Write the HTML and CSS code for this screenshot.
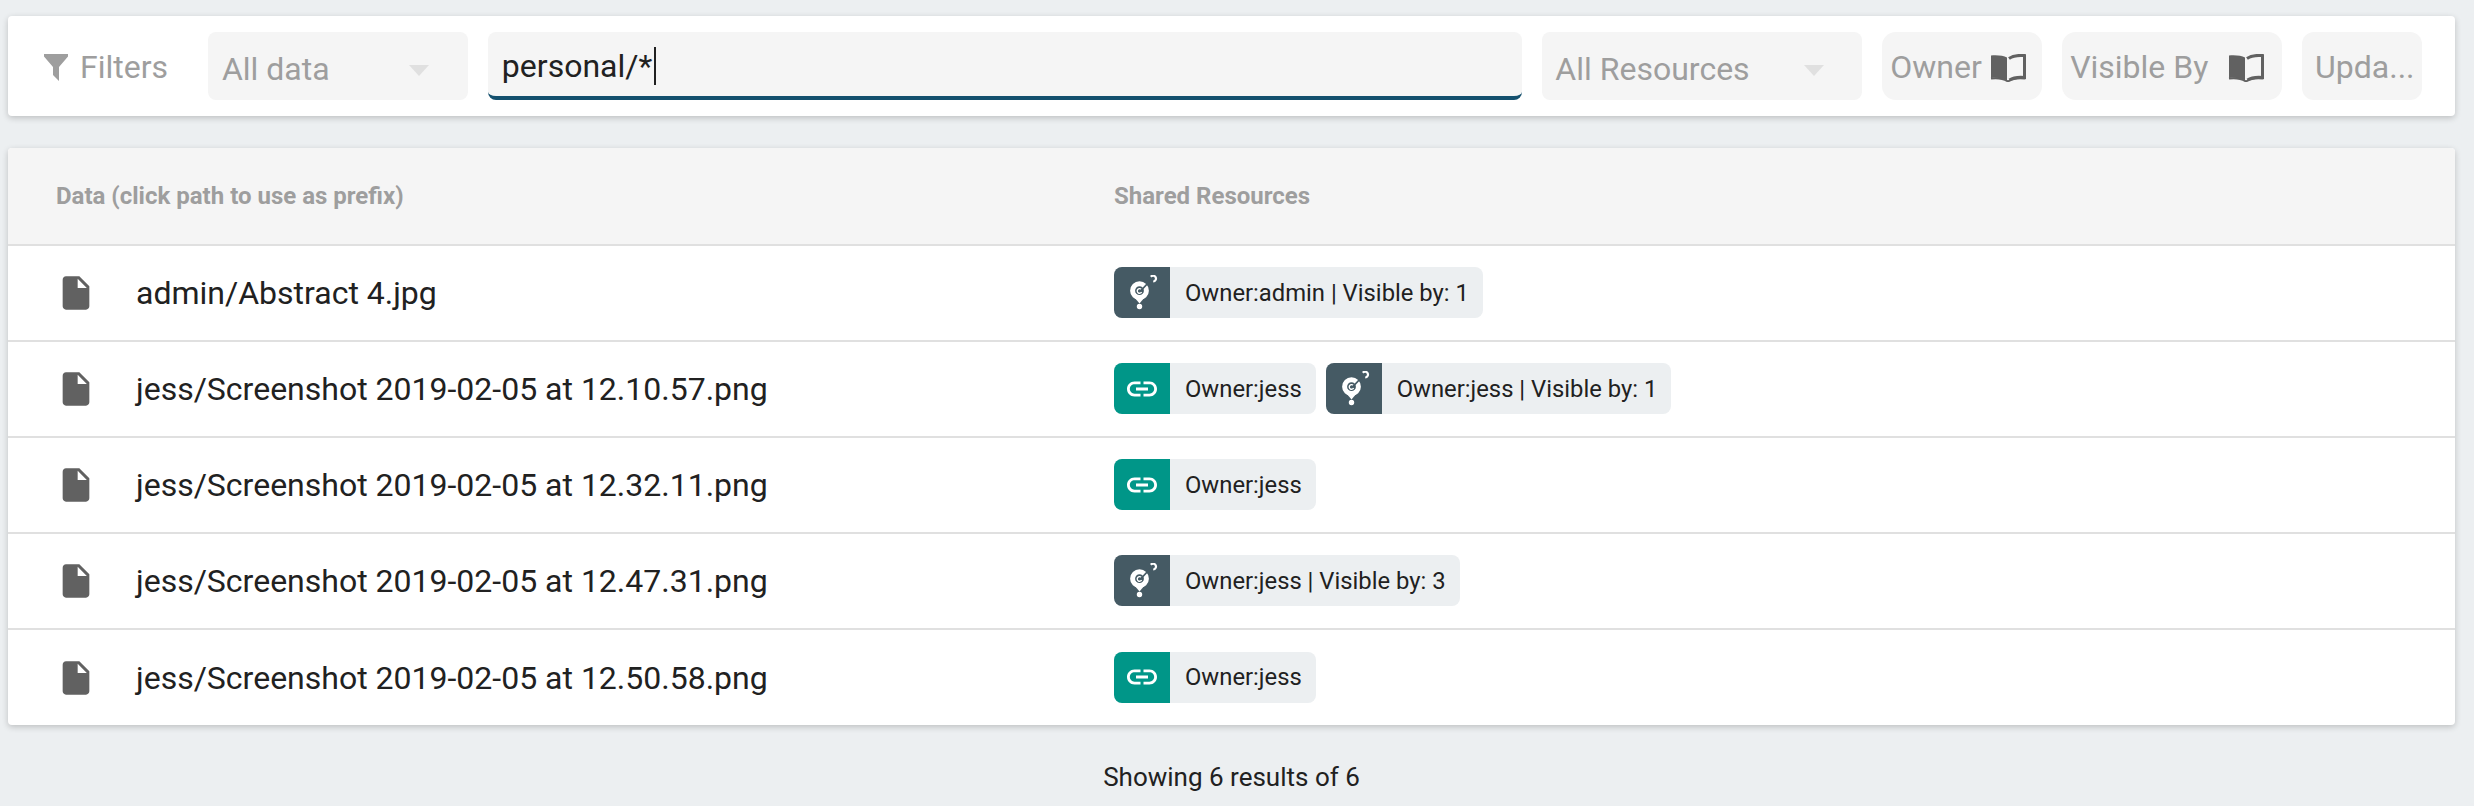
FILE: index.html
```html
<!DOCTYPE html>
<html lang="en">
<head>
<meta charset="utf-8">
<title>Shared data</title>
<link rel="stylesheet" href="styles.css">
</head>
<body>
<svg class="defs" width="0" height="0" aria-hidden="true">
  <defs>
    <symbol id="i-book" viewBox="0 0 36 28">
      <path d="M17 3.500C13.500 1.500 8 1 1 1.400V24c6.500-.6 12 .2 16 2.700z" fill="#616161"/>
      <path d="M19 4.500C22.500 2 28 1 34.500 1.600V23.500c-6-.5-11.500 .2-15 2.600" fill="none" stroke="#616161" stroke-width="3"/>
      <path d="M1 24.500c6.500-.8 12.500 0 17 3 4.500-3 10.500-3.800 17-3" fill="none" stroke="#616161" stroke-width="2"/>
    </symbol>
    <symbol id="i-file" viewBox="0 0 24 24">
      <path d="M6 2c-1.100 0-2 .9-2 2v16c0 1.100.9 2 2 2h12c1.100 0 2-.9 2-2V8l-6-6H6zm7 7V3.500L18.500 9H13z"/>
    </symbol>
    <symbol id="i-link" viewBox="0 0 24 24">
      <path d="M3.900 12c0-1.710 1.390-3.100 3.100-3.100h4V7H7c-2.760 0-5 2.240-5 5s2.240 5 5 5h4v-1.900H7c-1.710 0-3.100-1.390-3.100-3.100zM8 13h8v-2H8v2zm9-6h-4v1.900h4c1.710 0 3.100 1.390 3.100 3.100s-1.390 3.100-3.100 3.100h-4V17h4c2.760 0 5-2.240 5-5s-2.240-5-5-5z"/>
    </symbol>
    <symbol id="i-share" viewBox="0 0 36 36">
      <circle cx="15.500" cy="15.700" r="6.900" fill="none" stroke="#fff" stroke-width="5"/>
      <path d="M10.500 22.500l5 6 5-6z" fill="#fff"/>
      <path d="M17.200 14.300a2.300 2.300 0 1 0 .4 2.700" fill="none" stroke="#fff" stroke-width="1.400"/>
      <path d="M17 15.500l9-9.500" stroke="#455a64" stroke-width="1.800"/>
      <path d="M26.800 1.800a2.900 2.900 0 1 1 2.400 4.700" fill="none" stroke="#fff" stroke-width="2.200"/>
      <circle cx="15.500" cy="31.500" r="2.700" fill="#fff"/>
    </symbol>
  </defs>
</svg>

<main class="page">
  <section class="filters card">
    <div class="filters-label">
      <svg class="funnel" viewBox="0 0 24 27" aria-hidden="true"><path d="M0 0h24v2.500L15 13v14l-6-6V13L0 2.500z"/></svg>
      <span>Filters</span>
    </div>
    <div class="field select select-data"><span>All data</span><i class="arrow"></i></div>
    <div class="field search"><span>personal/*</span><i class="caret"></i></div>
    <div class="field select select-res"><span>All Resources</span><i class="arrow"></i></div>
    <div class="field btn btn-owner"><span>Owner</span><svg class="book"><use href="#i-book"/></svg></div>
    <div class="field btn btn-visible"><span>Visible By</span><svg class="book"><use href="#i-book"/></svg></div>
    <div class="field btn btn-update"><span>Upda...</span></div>
  </section>

  <section class="table card">
    <div class="row head">
      <div class="cell-head">Data (click path to use as prefix)</div>
      <div class="cell-head">Shared Resources</div>
    </div>

    <div class="row">
      <div class="path"><svg class="file"><use href="#i-file"/></svg><span>admin/Abstract 4.jpg</span></div>
      <div class="chips">
        <div class="chip"><div class="chip-icon dark"><svg class="glyph"><use href="#i-share"/></svg></div><span class="chip-text">Owner:admin | Visible by: 1</span></div>
      </div>
    </div>

    <div class="row">
      <div class="path"><svg class="file"><use href="#i-file"/></svg><span>jess/Screenshot 2019-02-05 at 12.10.57.png</span></div>
      <div class="chips">
        <div class="chip"><div class="chip-icon teal"><svg class="glyph link"><use href="#i-link"/></svg></div><span class="chip-text">Owner:jess</span></div>
        <div class="chip"><div class="chip-icon dark"><svg class="glyph"><use href="#i-share"/></svg></div><span class="chip-text">Owner:jess | Visible by: 1</span></div>
      </div>
    </div>

    <div class="row">
      <div class="path"><svg class="file"><use href="#i-file"/></svg><span>jess/Screenshot 2019-02-05 at 12.32.11.png</span></div>
      <div class="chips">
        <div class="chip"><div class="chip-icon teal"><svg class="glyph link"><use href="#i-link"/></svg></div><span class="chip-text">Owner:jess</span></div>
      </div>
    </div>

    <div class="row">
      <div class="path"><svg class="file"><use href="#i-file"/></svg><span>jess/Screenshot 2019-02-05 at 12.47.31.png</span></div>
      <div class="chips">
        <div class="chip"><div class="chip-icon dark"><svg class="glyph"><use href="#i-share"/></svg></div><span class="chip-text">Owner:jess | Visible by: 3</span></div>
      </div>
    </div>

    <div class="row">
      <div class="path"><svg class="file"><use href="#i-file"/></svg><span>jess/Screenshot 2019-02-05 at 12.50.58.png</span></div>
      <div class="chips">
        <div class="chip"><div class="chip-icon teal"><svg class="glyph link"><use href="#i-link"/></svg></div><span class="chip-text">Owner:jess</span></div>
      </div>
    </div>
  </section>

  <footer class="results">Showing 6 results of 6</footer>
</main>
</body>
</html>
```
FILE: styles.css
```css
* { box-sizing: border-box; }

html, body {
  margin: 0;
  height: 806px;
  overflow: hidden;
  background: #eceff1;
}

body {
  font-family: Roboto, "Liberation Sans", sans-serif;
  color: #212121;
}

.defs { display: block; height: 0; }

.page {
  display: flex;
  flex-direction: column;
  gap: 32px;
  width: 2447px;
  margin: 0 0 0 8px;
  padding-top: 16px;
}

.card {
  background: #fff;
  border-radius: 4px;
  box-shadow: 0 2px 6px rgba(0, 0, 0, .2);
}

/* Filter bar */
.filters {
  display: flex;
  align-items: center;
  gap: 20px;
  height: 100px;
  padding: 0 33px 0 36px;
}

.filters-label {
  display: flex;
  align-items: center;
  gap: 12px;
  width: 144px;
  padding-top: 2px;
  font-size: 32px;
  color: #9e9e9e;
}

.funnel { width: 24px; height: 27px; fill: #9e9e9e; flex: none; }

.field {
  display: flex;
  align-items: center;
  height: 68px;
  background: #f5f5f5;
  border-radius: 8px;
  font-size: 32px;
  color: #9e9e9e;
}

.select { padding: 6px 14px 0; justify-content: space-between; }
.select-data { width: 260px; padding-right: 39px; }
.select-res { width: 320px; padding-left: 13px; padding-right: 38px; }

.arrow {
  width: 0;
  height: 0;
  border-left: 10px solid transparent;
  border-right: 10px solid transparent;
  border-top: 11px solid #e0e0e0;
  margin-top: 2px;
}

.search {
  width: 1035px;
  padding: 4px 14px 0;
  border-bottom: 4px solid #14506e;
  color: #212121;
}

.caret {
  width: 2px;
  height: 38px;
  margin-left: 2px;
  background: #212121;
}

.btn { padding: 2px 0 0 8px; gap: 8px; }
.btn-owner { width: 160px; border-radius: 14px; }
.btn-visible { width: 220px; gap: 20px; border-radius: 14px; }
.btn-update { width: 120px; padding-left: 13px; border-radius: 12px; }

.book { width: 36px; height: 28px; flex: none; margin-top: 1px; }

/* Table */
.table { display: flex; flex-direction: column; }

.row {
  display: grid;
  grid-template-columns: 1106px 1fr;
  align-items: center;
  height: 96px;
  border-bottom: 2px solid #e0e0e0;
}
.row:last-child { height: 95px; border-bottom: 0; }

.head {
  height: 98px;
  background: #f5f5f5;
  border-radius: 4px 4px 0 0;
}

.cell-head {
  font-size: 24px;
  font-weight: 700;
  color: #9e9e9e;
}
.cell-head:first-child { padding-left: 48px; }

.path {
  display: flex;
  align-items: center;
  gap: 40px;
  padding-left: 48px;
  font-size: 32px;
}

.file { width: 40px; height: 40px; fill: #616161; flex: none; }

.chips { display: flex; gap: 10px; padding-bottom: 1px; }

.chip {
  display: flex;
  align-items: center;
  height: 51px;
  background: #eceff1;
  border-radius: 8px;
  overflow: hidden;
  font-size: 23.800px;
}

.chip-icon {
  display: flex;
  align-items: center;
  justify-content: center;
  width: 56px;
  height: 100%;
}
.dark { background: #455a64; }
.teal { background: #009688; }

.glyph { width: 36px; height: 36px; fill: #fff; }

.chip-text { padding: 0 14px 0 15px; white-space: nowrap; }

.results {
  margin-top: 5px;
  text-align: center;
  font-size: 26px;
}
```
